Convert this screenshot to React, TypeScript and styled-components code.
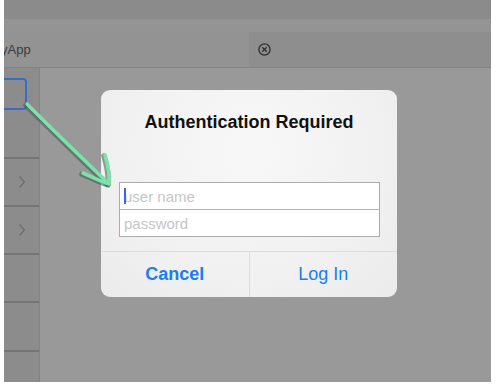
import React from "react";
import styled, { createGlobalStyle } from "styled-components";

const Global = createGlobalStyle`
  html, body { margin: 0; padding: 0; background: #ffffff; }
  body { font-family: "Liberation Sans", Arial, sans-serif; }
`;

const Frame = styled.div`
  position: relative;
  margin-left: 4px;
  width: 487px;
  height: 382px;
  background: #999999;
  overflow: hidden;
  display: flex;
  flex-direction: column;
`;

const StatusBar = styled.div`
  height: 19px;
  flex-shrink: 0;
  background: #8a8b8a;
`;

const NavBand = styled.div`
  height: 13px;
  flex-shrink: 0;
  background: #949494;
`;

const TabBar = styled.div`
  height: 35px;
  flex-shrink: 0;
  background: #8e8e8e;
  border-bottom: 1px solid #848484;
  display: flex;
  align-items: center;
`;

const Tab = styled.div`
  width: 245px;
  height: 100%;
  background: #939393;
  overflow: hidden;
  display: flex;
  align-items: center;
  font-size: 13px;
  color: #3a3a3a;
  white-space: nowrap;
`;

const TabLabel = styled.span`
  margin-left: -3px;
`;

const CloseButton = styled.div`
  margin-left: 9px;
  width: 13px;
  height: 13px;
  display: flex;
`;

const Body = styled.div`
  flex: 1;
  min-height: 0;
  overflow: hidden;
  display: flex;
`;

const Sidebar = styled.div`
  width: 35px;
  flex-shrink: 0;
  background: #8c8c8c;
  border-right: 1px solid #848484;
  display: flex;
  flex-direction: column;
`;

const SideRow = styled.div<{ $h: number }>`
  height: ${(p) => p.$h}px;
  flex-shrink: 0;
  border-bottom: 2px solid #757575;
  box-sizing: border-box;
  display: flex;
  align-items: center;
  justify-content: center;
`;

const TopSection = styled.div`
  height: 91px;
  flex-shrink: 0;
  border-bottom: 2px solid #757575;
  box-sizing: border-box;
  padding-top: 10px;
`;

const SelectedBox = styled.div`
  margin-left: -6px;
  width: 29px;
  height: 32px;
  box-sizing: border-box;
  border: 2px solid #3b6cc4;
  border-radius: 4px;
`;

const Main = styled.div`
  flex: 1;
  padding: 22px 0 0 61px;
`;

const Dialog = styled.div`
  width: 296px;
  height: 207px;
  box-sizing: border-box;
  border-radius: 9px;
  background: radial-gradient(ellipse at 50% 30%, #f8f8f8 0%, #f1f1f1 60%, #ebebeb 100%);
  display: flex;
  flex-direction: column;
  padding-top: 20px;
  overflow: hidden;
`;

const Title = styled.div`
  font-size: 18px;
  line-height: 24px;
  font-weight: bold;
  color: #111;
  text-align: center;
`;

const Fields = styled.div`
  margin: 48px 17px 14px 18px;
  display: flex;
  flex-direction: column;
  border: 1px solid #ababab;
  background: #ffffff;
`;

const Field = styled.div<{ $first?: boolean }>`
  height: 26px;
  display: flex;
  align-items: center;
  padding-left: 4px;
  border-top: ${(p) => (p.$first ? "none" : "1px solid #b5b5b5")};
  font-size: 15px;
  color: #c6c6c6;
`;

const Caret = styled.span`
  width: 2px;
  height: 16px;
  background: #3866f0;
  margin-right: -2px;
  position: relative;
  z-index: 1;
`;

const Buttons = styled.div`
  flex: 1;
  display: flex;
  border-top: 1px solid #dcdcdc;
`;

const DialogButton = styled.div<{ $bold?: boolean; $divider?: boolean }>`
  flex: 1;
  display: flex;
  align-items: center;
  justify-content: center;
  font-size: 18px;
  color: #1c7cf2;
  font-weight: ${(p) => (p.$bold ? "bold" : "normal")};
  border-right: ${(p) => (p.$divider ? "1px solid #dcdcdc" : "none")};
`;

const ArrowOverlay = styled.svg`
  position: absolute;
  left: 0;
  top: 0;
  pointer-events: none;
`;

const Chevron = () => (
  <svg width="8" height="14" viewBox="0 0 8 14">
    <path d="M1.5 1.5 L6.5 7 L1.5 12.5" fill="none" stroke="#6c6c6c" strokeWidth="1.2" />
  </svg>
);

export default function App() {
  const arrowLine = "M23 104 C 45 126, 80 160, 104 183";
  const head1 = "M101 155 C 104 165, 106 174, 105 183";
  const head2 = "M79 173 C 88 177, 96 181, 105 184";
  return (
    <>
      <Global />
      <Frame>
        <StatusBar />
        <NavBand />
        <TabBar>
          <Tab>
            <TabLabel>yApp</TabLabel>
          </Tab>
          <CloseButton>
            <svg width="13" height="13" viewBox="0 0 13 13">
              <circle cx="6.5" cy="6.5" r="5.6" fill="none" stroke="#2e2e2e" strokeWidth="1.3" />
              <path d="M4.3 4.3 L8.7 8.7 M8.7 4.3 L4.3 8.7" stroke="#2e2e2e" strokeWidth="1.3" />
            </svg>
          </CloseButton>
        </TabBar>
        <Body>
          <Sidebar>
            <TopSection>
              <SelectedBox />
            </TopSection>
            <SideRow $h={48}>
              <Chevron />
            </SideRow>
            <SideRow $h={48}>
              <Chevron />
            </SideRow>
            <SideRow $h={48} />
            <SideRow $h={49} />
            <SideRow $h={48} />
          </Sidebar>
          <Main>
            <Dialog>
              <Title>Authentication Required</Title>
              <Fields>
                <Field $first>
                  <Caret />
                  <span>user name</span>
                </Field>
                <Field>password</Field>
              </Fields>
              <Buttons>
                <DialogButton $bold $divider>Cancel</DialogButton>
                <DialogButton>Log In</DialogButton>
              </Buttons>
            </Dialog>
          </Main>
        </Body>
        <ArrowOverlay width="487" height="382" viewBox="0 0 487 382">
          <g fill="none" strokeLinecap="round" transform="translate(-1 1)">
            <path d={arrowLine} stroke="#3d5a48" strokeWidth="5.5" opacity="0.55" />
            <path d={head1} stroke="#3d5a48" strokeWidth="5.5" opacity="0.55" />
            <path d={head2} stroke="#3d5a48" strokeWidth="5.5" opacity="0.55" />
          </g>
          <g fill="none" strokeLinecap="round">
            <path d={arrowLine} stroke="#7be2ad" strokeWidth="3.6" />
            <path d={head1} stroke="#7be2ad" strokeWidth="3.6" />
            <path d={head2} stroke="#7be2ad" strokeWidth="3.6" />
          </g>
        </ArrowOverlay>
      </Frame>
    </>
  );
}
